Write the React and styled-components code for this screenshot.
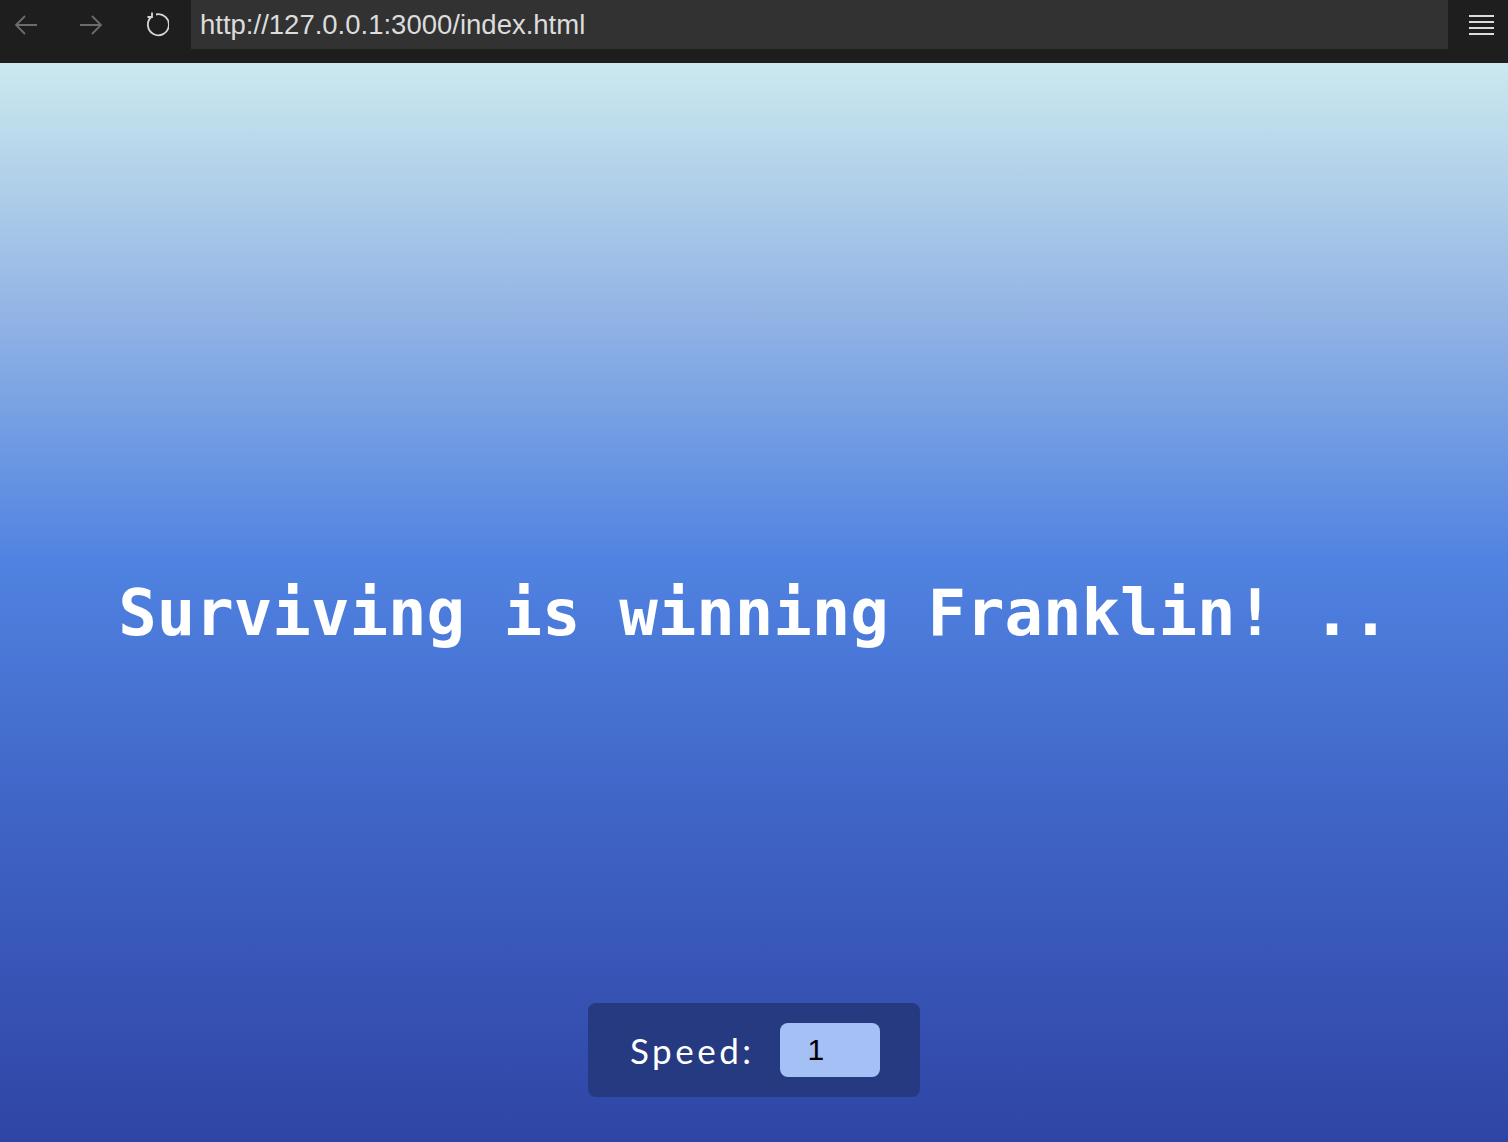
import React, { useState } from "react";
import styled, { createGlobalStyle } from "styled-components";

const GlobalStyle = createGlobalStyle`
  html, body {
    margin: 0;
    padding: 0;
  }
  body {
    background: #1e1e1e;
    font-family: "Liberation Sans", Arial, sans-serif;
  }
`;

// browser chrome ------------------------------------------------
const Chrome = styled.div`
  height: 63px;
  background: #1e1e1e;
  display: flex;
  align-items: flex-start;
  box-sizing: border-box;
`;

const NavGroup = styled.div`
  display: flex;
  align-items: center;
  height: 49px;
  padding-left: 13px;
  gap: 39px;
  width: 178px;
`;

const NavIcon = styled.svg`
  width: 26px;
  height: 26px;
  flex: none;
  stroke: ${(p) => (p.$on ? "#d6d6d6" : "#6c6c6c")};
  fill: none;
  stroke-width: 1.8;
`;

const UrlField = styled.div`
  flex: 1;
  height: 49px;
  background: #323232;
  color: #dcdcdc;
  font-size: 27.5px;
  display: flex;
  align-items: center;
  padding-left: 9px;
`;

const Menu = styled.div`
  width: 60px;
  height: 49px;
  box-sizing: border-box;
  padding-left: 6px;
  display: flex;
  flex-direction: column;
  justify-content: center;
  align-items: center;
  gap: 4px;
`;

const MenuLine = styled.span`
  display: block;
  width: 25px;
  height: 2px;
  background: #dcdcdc;
`;

// page ----------------------------------------------------------
const Page = styled.main`
  height: 1079px;
  background: linear-gradient(
    180deg,
    #cbe9ee 0%,
    #96b7e5 22%,
    #5083e1 46%,
    #4066c8 68%,
    #2f45a5 100%
  );
  display: flex;
  flex-direction: column;
  align-items: center;
`;

const Title = styled.h1`
  margin: 0;
  margin-top: 510px;
  font-family: "DejaVu Sans Mono", monospace;
  font-weight: 700;
  font-size: 64px;
  color: #ffffff;
  white-space: pre;
  line-height: 80px;
`;

const SpeedBox = styled.div`
  margin-top: auto;
  margin-bottom: 45px;
  width: 332px;
  height: 94px;
  box-sizing: border-box;
  background: #263a82;
  border-radius: 8px;
  display: flex;
  align-items: center;
  padding-left: 42px;
  gap: 25px;
`;

const SpeedLabel = styled.label`
  font-family: Lato, "Open Sans", sans-serif;
  font-size: 35px;
  letter-spacing: 3.5px;
  color: #ffffff;
`;

const SpeedInput = styled.input`
  width: 100px;
  height: 54px;
  box-sizing: border-box;
  border: none;
  border-radius: 8px;
  background: #a5c0f4;
  font-family: "Liberation Sans", Arial, sans-serif;
  font-size: 30px;
  color: #000;
  padding-left: 28px;
  outline: none;
`;

export default function App() {
  const [speed, setSpeed] = useState("1");

  return (
    <>
      <GlobalStyle />
      <Chrome>
        <NavGroup>
          <NavIcon viewBox="0 0 26 26">
            <path d="M24 13H3M12 4l-9 9 9 9" />
          </NavIcon>
          <NavIcon viewBox="0 0 26 26">
            <path d="M2 13h21M14 4l9 9-9 9" />
          </NavIcon>
          <NavIcon viewBox="0 0 26 26" $on>
            <path d="M8.5 4.8A10.5 10.5 0 1 0 13 2.5" />
            <path d="M9 0.5v4.5h-4.5" />
          </NavIcon>
        </NavGroup>
        <UrlField>http://127.0.0.1:3000/index.html</UrlField>
        <Menu>
          <MenuLine />
          <MenuLine />
          <MenuLine />
          <MenuLine />
        </Menu>
      </Chrome>
      <Page>
        <Title>Surviving is winning Franklin! ..</Title>
        <SpeedBox>
          <SpeedLabel>Speed:</SpeedLabel>
          <SpeedInput value={speed} onChange={(e) => setSpeed(e.target.value)} />
        </SpeedBox>
      </Page>
    </>
  );
}
